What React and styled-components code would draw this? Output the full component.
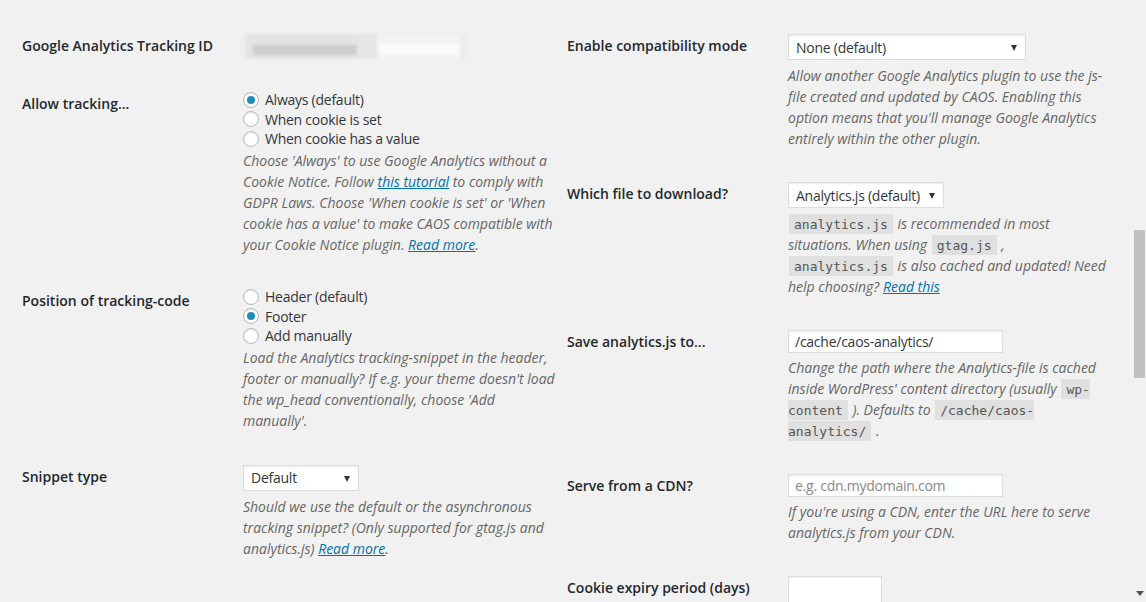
import React from "react";
import styled, { createGlobalStyle } from "styled-components";

const GlobalStyle = createGlobalStyle`
  html, body {
    margin: 0;
    padding: 0;
    overflow: hidden;
    background: #f1f1f1;
  }
  body {
    font-family: "Open Sans", "Noto Sans", sans-serif;
    font-size: 14px;
    color: #444;
  }
  * { box-sizing: border-box; }
`;

const Page = styled.div`
  display: grid;
  grid-template-columns: 545px 553px;
  padding-left: 22px;
  padding-top: 17px;
`;

const Column = styled.div`
  display: flex;
  flex-direction: column;
`;

const Row = styled.div`
  display: flex;
  align-items: flex-start;
`;

const Label = styled.div`
  width: 221px;
  flex: none;
  padding: 20px 0;
  font-size: 14px;
  font-weight: 600;
  line-height: 18px;
  color: #23282d;
`;

const Field = styled.div`
  flex: 1;
  min-width: 0;
  padding: ${(p) => p.$top ?? 17}px 10px ${(p) => p.$bottom ?? 16}px 0;
`;

const Description = styled.p`
  margin: ${(p) => p.$gap ?? 5}px 0 0;
  font-size: 14px;
  font-style: italic;
  line-height: 21px;
  color: #666;
`;

const Link = styled.a`
  color: #0073aa;
  text-decoration: underline;
`;

const Code = styled.code`
  font-family: "DejaVu Sans Mono", "Liberation Mono", monospace;
  font-style: normal;
  font-size: 13px;
  line-height: 1;
  color: #555;
  background: rgba(0, 0, 0, 0.07);
  padding: 3px 5px 2px 5px;
  margin: 0 1px;
`;

const RadioList = styled.div`
  display: flex;
  flex-direction: column;
`;

const RadioLine = styled.label`
  display: flex;
  align-items: center;
  gap: 6px;
  height: 19.5px;
  font-size: 14px;
  letter-spacing: -0.25px;
  color: #32373c;
  line-height: 19px;
`;

const RadioDot = styled.span`
  position: relative;
  flex: none;
  width: 16px;
  height: 16px;
  border-radius: 50%;
  border: 1px solid #b4b9be;
  background: #fff;
  box-shadow: inset 0 1px 2px rgba(0, 0, 0, 0.1);

  &::after {
    content: "";
    display: ${(p) => (p.$checked ? "block" : "none")};
    position: absolute;
    left: 3px;
    top: 3px;
    width: 8px;
    height: 8px;
    border-radius: 50%;
    background: #1e8cbe;
  }
`;

const SelectBox = styled.div`
  position: relative;
  display: flex;
  align-items: center;
  width: ${(p) => p.$width}px;
  height: 26px;
  padding: 0 7px;
  background: #fff;
  border: 1px solid #ddd;
  box-shadow: inset 0 1px 2px rgba(0, 0, 0, 0.07);
  font-size: 14px;
  letter-spacing: -0.25px;
  color: #32373c;

  &::after {
    content: "";
    position: absolute;
    right: 8px;
    top: 10px;
    border-left: 3.5px solid transparent;
    border-right: 3.5px solid transparent;
    border-top: 6px solid #333;
  }
`;

const TextInput = styled.input`
  display: block;
  width: ${(p) => p.$width}px;
  height: ${(p) => p.$height ?? 23}px;
  margin: 0;
  padding: 0 6px;
  background: #fff;
  border: 1px solid #ddd;
  box-shadow: inset 0 1px 2px rgba(0, 0, 0, 0.07);
  font-family: "Open Sans", "Noto Sans", sans-serif;
  font-size: 14px;
  letter-spacing: -0.25px;
  color: #32373c;
  outline: none;

  &::placeholder {
    color: #888;
  }
`;

const BlurredId = styled.svg`
  display: block;
  margin-left: -3px;
`;

const ScrollThumb = styled.div`
  position: fixed;
  right: 1px;
  top: 230px;
  width: 11px;
  height: 148px;
  background: #c1c1c1;
`;

const ScrollArrow = styled.div`
  position: fixed;
  right: 2px;
  bottom: 6px;
  width: 0;
  height: 0;
  border-left: 4px solid transparent;
  border-right: 4px solid transparent;
  border-top: 5px solid #505050;
`;

function Radio({ checked, children }) {
  return (
    <RadioLine>
      <RadioDot $checked={checked} />
      {children}
    </RadioLine>
  );
}

function Select({ width, children }) {
  return <SelectBox $width={width}>{children}</SelectBox>;
}

export default function App() {
  return (
    <>
      <GlobalStyle />
      <Page>
        <Column>
          <Row>
            <Label>Google Analytics Tracking ID</Label>
            <Field $top={14} $bottom={15}>
              <BlurredId width="228" height="29" viewBox="0 0 228 29">
                <defs>
                  <filter id="pix" x="-10%" y="-30%" width="120%" height="160%">
                    <feGaussianBlur stdDeviation="1.6" />
                  </filter>
                </defs>
                <g filter="url(#pix)">
                  <rect x="2" y="2" width="224" height="26" fill="#ececec" />
                  <rect x="6" y="3" width="133" height="25" fill="#e3e3e3" />
                  <rect x="13" y="14" width="104" height="10" fill="#cdcdcd" />
                  <rect x="117" y="4" width="20" height="22" fill="#e6e6e6" />
                  <rect x="137" y="3" width="84" height="25" fill="#f3f3f3" />
                  <rect x="140" y="13" width="78" height="11" fill="#fbfbfb" />
                </g>
              </BlurredId>
            </Field>
          </Row>

          <Row>
            <Label>Allow tracking...</Label>
            <Field $top={15} $bottom={16.5}>
              <RadioList>
                <Radio checked>Always (default)</Radio>
                <Radio>When cookie is set</Radio>
                <Radio>When cookie has a value</Radio>
              </RadioList>
              <Description $gap={1.75}>
                Choose 'Always' to use Google Analytics without a Cookie Notice. Follow{" "}
                <Link href="#">this tutorial</Link> to comply with GDPR Laws. Choose 'When cookie is
                set' or 'When cookie has a value' to make CAOS compatible with your Cookie Notice
                plugin. <Link href="#">Read more</Link>.
              </Description>
            </Field>
          </Row>

          <Row>
            <Label>Position of tracking-code</Label>
            <Field $top={15} $bottom={16.5}>
              <RadioList>
                <Radio>Header (default)</Radio>
                <Radio checked>Footer</Radio>
                <Radio>Add manually</Radio>
              </RadioList>
              <Description $gap={1.75}>
                Load the Analytics tracking-snippet in the header, footer or manually? If e.g. your
                theme doesn't load the wp_head conventionally, choose 'Add manually'.
              </Description>
            </Field>
          </Row>

          <Row>
            <Label>Snippet type</Label>
            <Field>
              <Select width={116}>Default</Select>
              <Description>
                Should we use the default or the asynchronous tracking snippet? (Only supported for
                gtag.js and analytics.js) <Link href="#">Read more</Link>.
              </Description>
            </Field>
          </Row>
        </Column>

        <Column>
          <Row>
            <Label>Enable compatibility mode</Label>
            <Field>
              <Select width={238}>None (default)</Select>
              <Description>
                Allow another Google Analytics plugin to use the js-file created and updated by
                CAOS. Enabling this option means that you'll manage Google Analytics entirely within
                the other plugin.
              </Description>
            </Field>
          </Row>

          <Row>
            <Label>Which file to download?</Label>
            <Field>
              <Select width={156}>Analytics.js (default)</Select>
              <Description>
                <Code>analytics.js</Code> is recommended in most situations. When using{" "}
                <Code>gtag.js</Code> , <Code>analytics.js</Code> is also cached and updated! Need
                help choosing? <Link href="#">Read this</Link>
              </Description>
            </Field>
          </Row>

          <Row>
            <Label>Save analytics.js to...</Label>
            <Field>
              <TextInput $width={215} defaultValue="/cache/caos-analytics/" readOnly />
              <Description $gap={4}>
                Change the path where the Analytics-file is cached inside WordPress' content
                directory (usually <Code>wp-content</Code> ). Defaults to{" "}
                <Code>/cache/caos-analytics/</Code> .
              </Description>
            </Field>
          </Row>

          <Row>
            <Label>Serve from a CDN?</Label>
            <Field>
              <TextInput $width={215} placeholder="e.g. cdn.mydomain.com" readOnly />
              <Description $gap={4}>
                If you're using a CDN, enter the URL here to serve analytics.js from your CDN.
              </Description>
            </Field>
          </Row>

          <Row>
            <Label>Cookie expiry period (days)</Label>
            <Field>
              <TextInput $width={94} $height={30} readOnly />
            </Field>
          </Row>
        </Column>
      </Page>
      <ScrollThumb />
      <ScrollArrow />
    </>
  );
}
